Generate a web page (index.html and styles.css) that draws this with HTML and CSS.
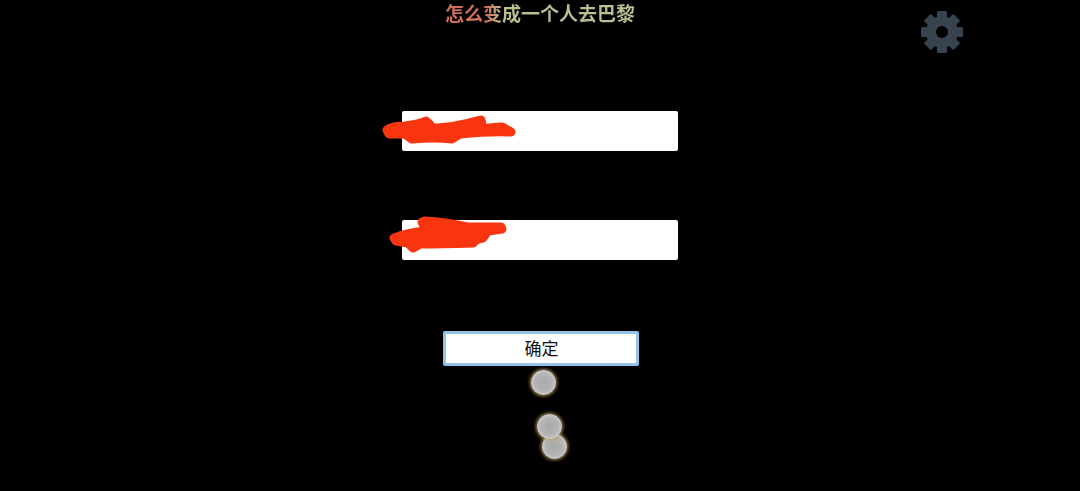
FILE: index.html
```html
<!DOCTYPE html>
<html lang="zh">
<head>
<meta charset="utf-8">
<title>怎么变成一个人去巴黎</title>
<link rel="stylesheet" href="styles.css">
</head>
<body>
<main class="page">
  <h1 class="title">怎么变成一个人去巴黎</h1>
  <svg class="gear" viewBox="-22 -22 44 44" aria-hidden="true">
    <g class="gear-teeth">
      <rect x="-5" y="-21" width="10" height="9" rx="1.5"/>
      <rect x="-5" y="-21" width="10" height="9" rx="1.5" transform="rotate(45)"/>
      <rect x="-5" y="-21" width="10" height="9" rx="1.5" transform="rotate(90)"/>
      <rect x="-5" y="-21" width="10" height="9" rx="1.5" transform="rotate(135)"/>
      <rect x="-5" y="-21" width="10" height="9" rx="1.5" transform="rotate(180)"/>
      <rect x="-5" y="-21" width="10" height="9" rx="1.5" transform="rotate(225)"/>
      <rect x="-5" y="-21" width="10" height="9" rx="1.5" transform="rotate(270)"/>
      <rect x="-5" y="-21" width="10" height="9" rx="1.5" transform="rotate(315)"/>
    </g>
    <circle class="gear-ring" r="11"/>
  </svg>
  <form class="form">
    <div class="field"></div>
    <div class="field"></div>
    <button class="confirm" type="button">确定</button>
  </form>
  <svg class="scribbles" viewBox="0 0 1080 491" aria-hidden="true">
    <path class="scrawl" d="M387 130 Q392 126 405 126 Q420 124 426 121 L433 128 Q450 128 481 120 L482 124 L476 130 Q495 127 502 127 L511 132 Q490 131 460 134 L452 139 Q435 137 412 139 L405 134 L389 134 Z"/>
    <path class="scrawl" d="M394 238 Q405 233 426 231 L422 222 L425 221 Q445 222 467 227 L501 227 L502 229 L488 231 L483 238 L476 240 L473 243 Q440 244 420 244 L413 248 L408 243 L396 241 Z"/>
  </svg>
  <span class="touch touch-a"></span>
  <span class="touch touch-b"></span>
  <span class="touch touch-c"></span>
</main>
</body>
</html>
```
FILE: styles.css
```css
* {
  box-sizing: border-box;
}

html,
body {
  margin: 0;
  height: 100%;
  background: #000;
}

.page {
  position: relative;
  height: 491px;
  overflow: hidden;
  display: flex;
  flex-direction: column;
  align-items: center;
  font-family: "Noto Sans CJK SC", "Liberation Sans", sans-serif;
}

.title {
  margin: 0;
  height: 26px;
  font-size: 19px;
  line-height: 26px;
  font-weight: 700;
  background: linear-gradient(90deg, #cf6f58 0, #cf7059 22%, #b9bf90 30%, #b7c295 100%);
  -webkit-background-clip: text;
  background-clip: text;
  color: transparent;
}

.gear {
  position: absolute;
  left: 920px;
  top: 10px;
  width: 44px;
  height: 44px;
  filter: blur(0.5px);
}

.gear-teeth {
  fill: #37434f;
}

.gear-ring {
  fill: none;
  stroke: #37434f;
  stroke-width: 10;
}

.form {
  display: flex;
  flex-direction: column;
  align-items: center;
  padding-top: 85px;
}

.field {
  width: 276px;
  height: 40px;
  margin-bottom: 69px;
  background: #fff;
  border-radius: 2px;
}

.field + .field {
  margin-bottom: 71px;
}

.confirm {
  width: 196px;
  height: 35px;
  margin: 0 0 0 1px;
  padding: 0 0 3px 2px;
  background: #fff;
  border: 3px solid #94c3ea;
  border-radius: 2px;
  color: #111;
  font: 400 17px/1 "Noto Sans CJK SC", "Liberation Sans", sans-serif;
}

.scribbles {
  position: absolute;
  inset: 0;
  width: 1080px;
  height: 491px;
}

.scrawl {
  fill: #f8350f;
  stroke: #f8350f;
  stroke-linejoin: round;
  stroke-width: 9;
}

.touch {
  position: absolute;
  width: 25px;
  height: 25px;
  border-radius: 50%;
  background: radial-gradient(circle, #a9a9a9 0, #b4b4b4 50%, #d8d8d6 82%, #f0ede0 100%);
  box-shadow: 0 0 3px 1.5px rgba(190, 150, 80, 0.7);
}

.touch-a {
  left: 531px;
  top: 370px;
}

.touch-b {
  left: 541.5px;
  top: 433.5px;
}

.touch-c {
  left: 537px;
  top: 414px;
}
```
